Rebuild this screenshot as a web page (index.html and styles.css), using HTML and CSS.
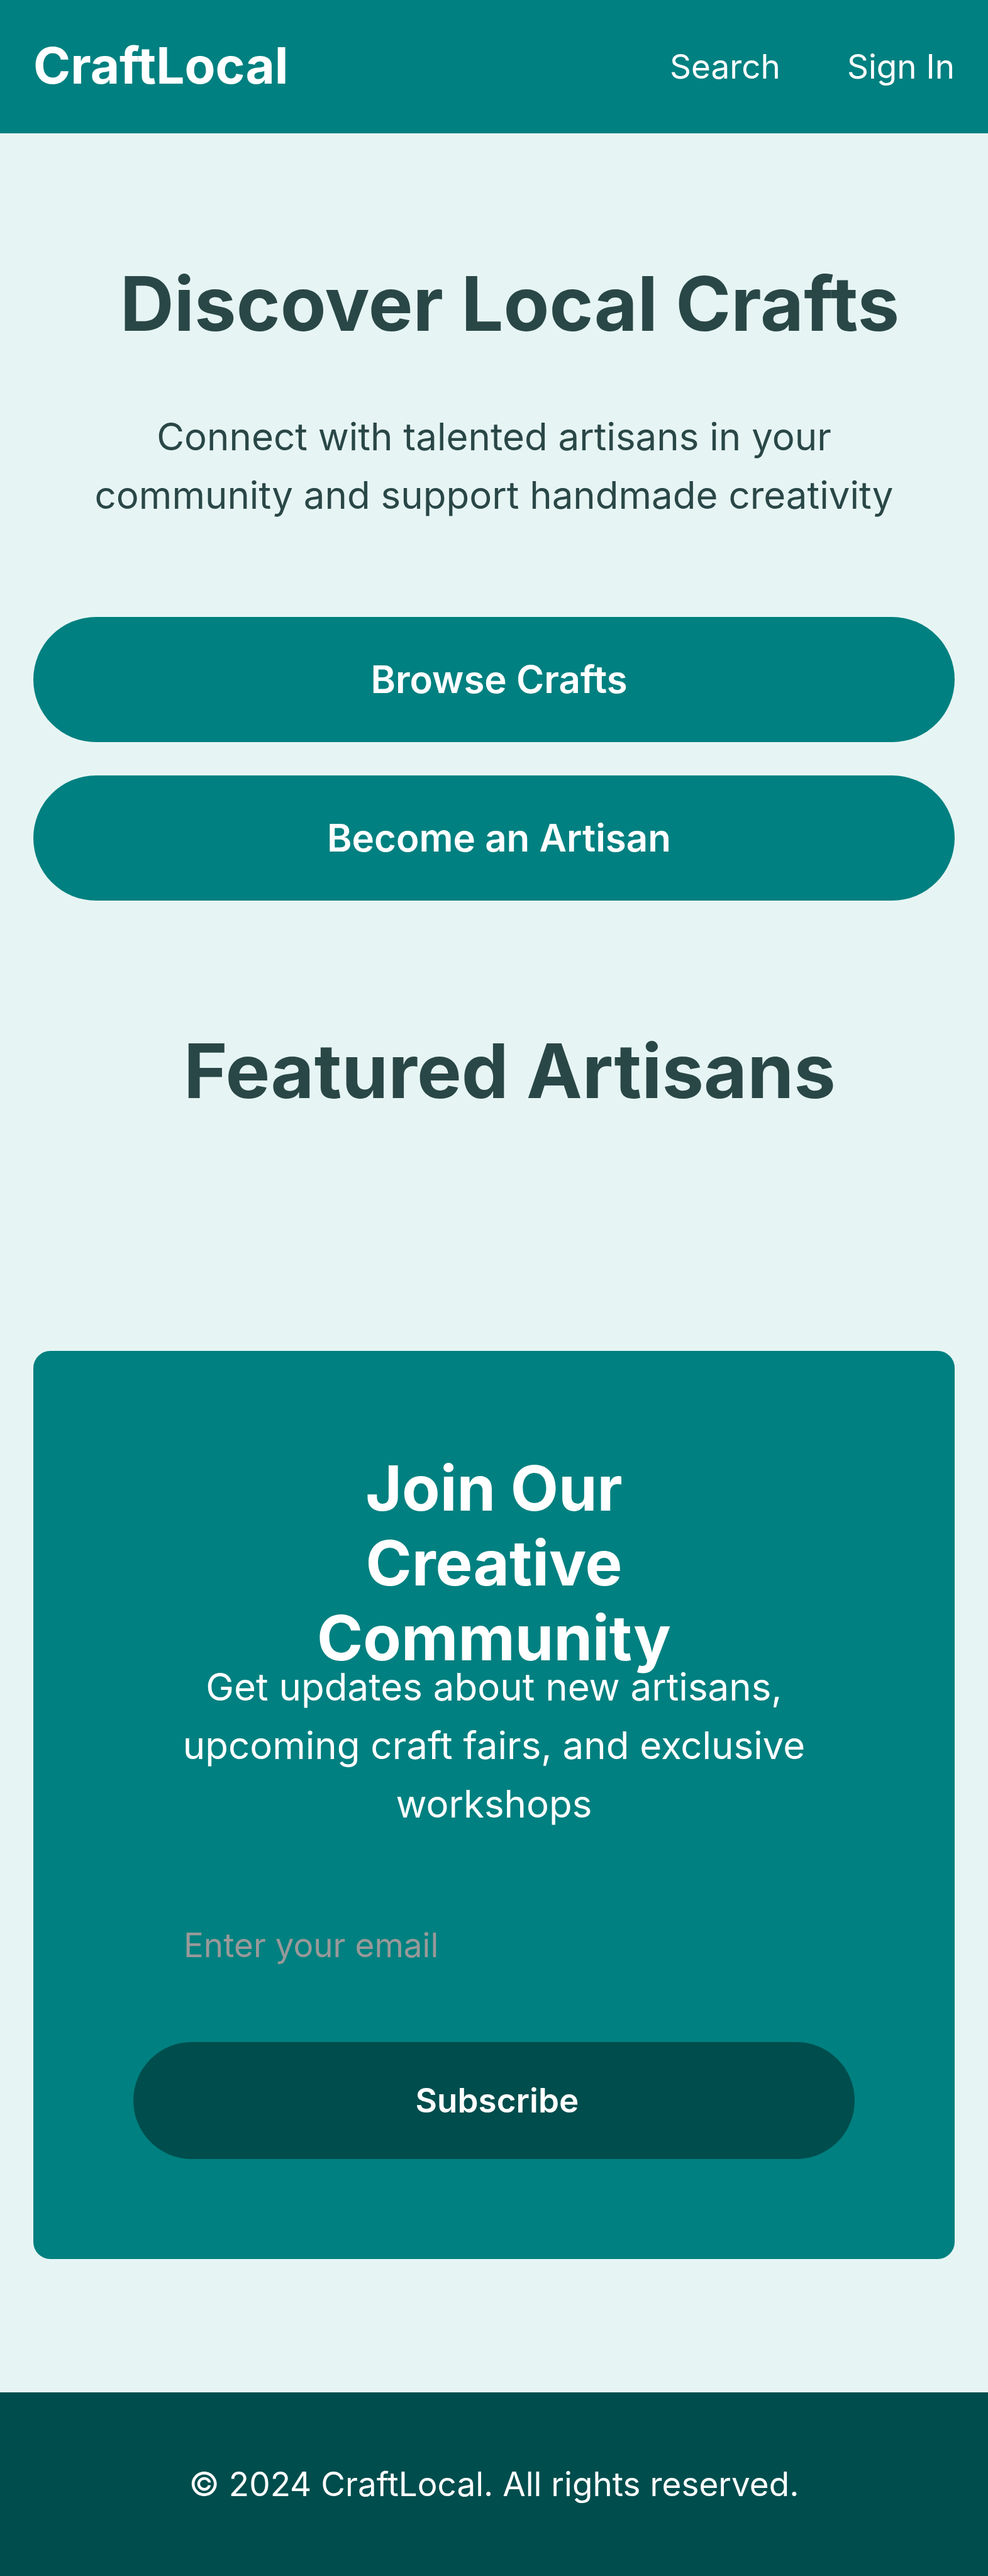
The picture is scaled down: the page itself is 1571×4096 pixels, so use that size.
FILE: index.html
```html
<!DOCTYPE html>
<html lang="en">
<head>
<meta charset="utf-8">
<meta name="viewport" content="width=device-width, initial-scale=1">
<title>CraftLocal</title>
<link rel="stylesheet" href="styles.css">
</head>
<body>
<header class="site-header">
  <a class="logo" href="#">CraftLocal</a>
  <nav class="site-nav">
    <a href="#search">Search</a>
    <a href="#sign-in">Sign In</a>
  </nav>
</header>
<main class="content">
  <section class="hero">
    <h1 class="title">Discover Local Crafts</h1>
    <p class="lead">Connect with talented artisans in your community and support handmade creativity</p>
    <div class="actions">
      <button class="button" type="button">Browse Crafts</button>
      <button class="button" type="button">Become an Artisan</button>
    </div>
  </section>
  <section class="featured">
    <h2 class="title">Featured Artisans</h2>
  </section>
  <section class="newsletter">
    <h2 class="newsletter-title">Join Our Creative Community</h2>
    <p class="newsletter-text">Get updates about new artisans, upcoming craft fairs, and exclusive workshops</p>
    <form class="newsletter-form">
      <input class="email" type="email" placeholder="Enter your email" aria-label="Email address">
      <button class="button subscribe" type="submit">Subscribe</button>
    </form>
  </section>
</main>
<footer class="site-footer">
  <p class="copyright">© 2024 CraftLocal. All rights reserved.</p>
</footer>
</body>
</html>
```
FILE: styles.css
```css
*, *::before, *::after {
  box-sizing: border-box;
}

body {
  margin: 0;
  background: #e6f5f4;
  color: #2a4747;
  font-family: Inter, "Liberation Sans", sans-serif;
  font-size: 53px;
  font-weight: 400;
  line-height: 80px;
}

h1, h2, p {
  margin: 0;
}

a {
  color: inherit;
  text-decoration: none;
}

.site-header {
  display: flex;
  align-items: flex-start;
  justify-content: space-between;
  padding: 66px 53px;
  background: #008080;
  color: #fff;
}

.logo {
  font-size: 80px;
  font-weight: 700;
  line-height: 76px;
}

.site-nav {
  display: flex;
  gap: 106px;
}

.content {
  padding: 212px 53px;
}

.title {
  padding-left: 50px;
  font-size: 119px;
  font-weight: 700;
  line-height: 119px;
  text-align: center;
}

.lead {
  max-width: 1325px;
  margin: 105px auto 147px;
  font-size: 60px;
  line-height: 93px;
  text-align: center;
}

.actions {
  display: flex;
  flex-direction: column;
  gap: 53px;
}

.button {
  width: 100%;
  padding: 53px 0 53px 16px;
  border: 0;
  border-radius: 100px;
  background: #008080;
  color: #fff;
  font-family: inherit;
  font-size: 60px;
  font-weight: 600;
  line-height: 93px;
}

.featured {
  padding: 212px 0 385px;
}

.newsletter {
  padding: 159px;
  border-radius: 27px;
  background: #008080;
  color: #fff;
  text-align: center;
}

.newsletter-title {
  max-width: 600px;
  margin: 0 auto -28px;
  font-size: 99px;
  font-weight: 700;
  line-height: 119px;
}

.newsletter-text {
  font-size: 60px;
  line-height: 93px;
}

.newsletter-form {
  display: flex;
  flex-direction: column;
  gap: 55px;
  margin-top: 78px;
}

.email {
  width: 100%;
  height: 199px;
  padding: 0 80px;
  border: 0;
  background: transparent;
  color: #fff;
  font: inherit;
}

.email::placeholder {
  color: #999;
  opacity: 1;
}

.subscribe {
  padding: 53px 0 53px 10px;
  background: #004d4d;
  font-size: 53px;
  line-height: 80px;
}

.site-footer {
  padding: 106px 53px;
  background: #004d4d;
  color: #fff;
  text-align: center;
}
```
